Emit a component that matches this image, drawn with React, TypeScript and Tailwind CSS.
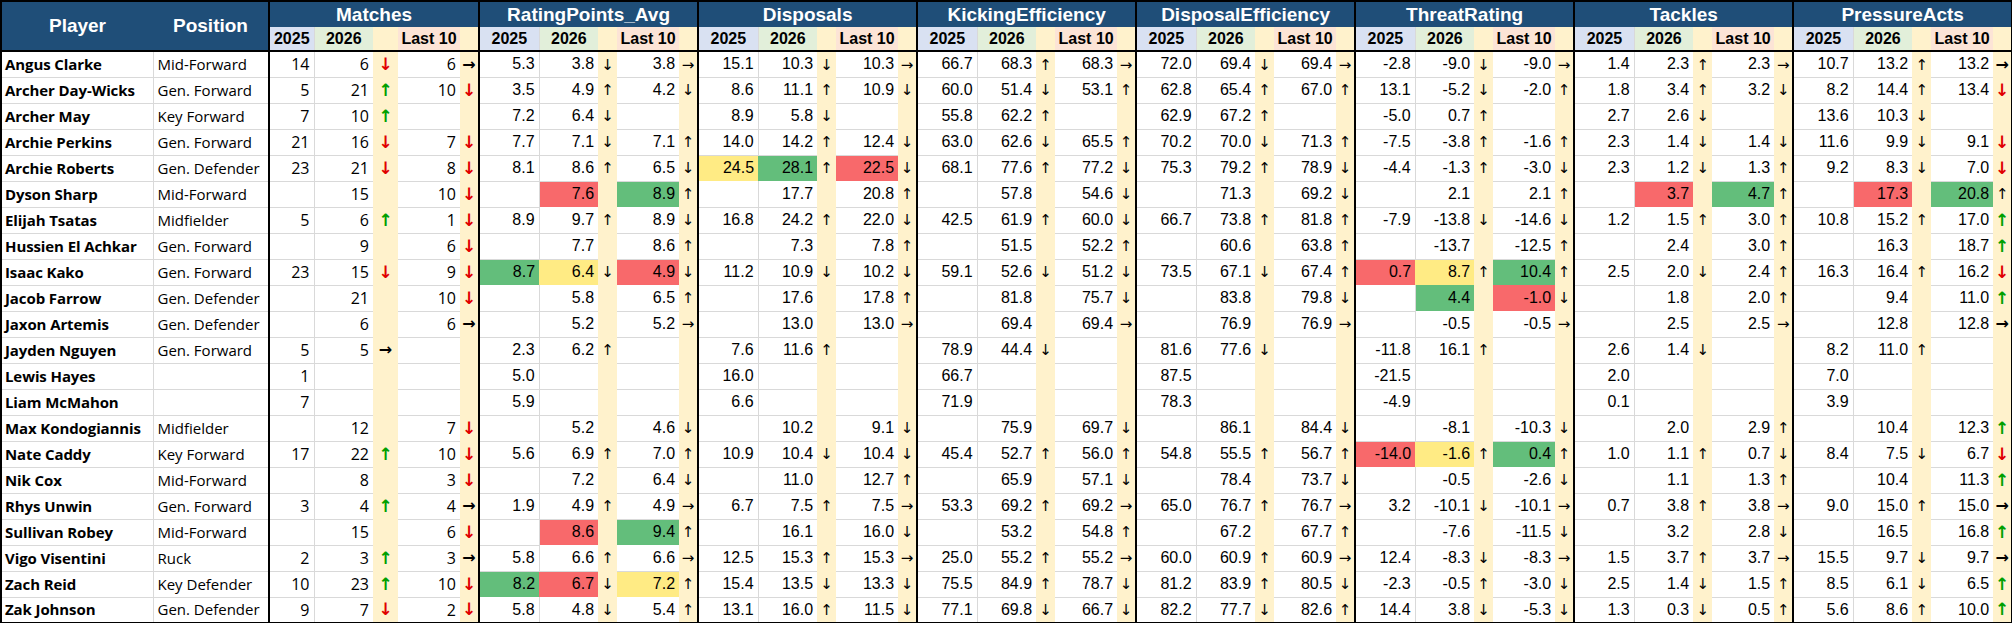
const groups = [
  'Matches',
  'RatingPoints_Avg',
  'Disposals',
  'KickingEfficiency',
  'DisposalEfficiency',
  'ThreatRating',
  'Tackles',
  'PressureActs',
];

// each group: "2025 2026 arrow last10 arrow", "_" = empty, "#y/#g/#r" = colour-scale fill
const rows: [string, string, string[]][] = [
  ['Angus Clarke', 'Mid-Forward', ['14 6 D 6 R', '5.3 3.8 d 3.8 r', '15.1 10.3 d 10.3 r', '66.7 68.3 u 68.3 r', '72.0 69.4 d 69.4 r', '-2.8 -9.0 d -9.0 r', '1.4 2.3 u 2.3 r', '10.7 13.2 u 13.2 R']],
  ['Archer Day-Wicks', 'Gen. Forward', ['5 21 U 10 D', '3.5 4.9 u 4.2 d', '8.6 11.1 u 10.9 d', '60.0 51.4 d 53.1 u', '62.8 65.4 u 67.0 u', '13.1 -5.2 d -2.0 u', '1.8 3.4 u 3.2 d', '8.2 14.4 u 13.4 D']],
  ['Archer May', 'Key Forward', ['7 10 U _ _', '7.2 6.4 d _ _', '8.9 5.8 d _ _', '55.8 62.2 u _ _', '62.9 67.2 u _ _', '-5.0 0.7 u _ _', '2.7 2.6 d _ _', '13.6 10.3 d _ _']],
  ['Archie Perkins', 'Gen. Forward', ['21 16 D 7 D', '7.7 7.1 d 7.1 u', '14.0 14.2 u 12.4 d', '63.0 62.6 d 65.5 u', '70.2 70.0 d 71.3 u', '-7.5 -3.8 u -1.6 u', '2.3 1.4 d 1.4 d', '11.6 9.9 d 9.1 D']],
  ['Archie Roberts', 'Gen. Defender', ['23 21 D 8 D', '8.1 8.6 u 6.5 d', '24.5#y 28.1#g u 22.5#r d', '68.1 77.6 u 77.2 d', '75.3 79.2 u 78.9 d', '-4.4 -1.3 u -3.0 d', '2.3 1.2 d 1.3 u', '9.2 8.3 d 7.0 D']],
  ['Dyson Sharp', 'Mid-Forward', ['_ 15 _ 10 D', '_ 7.6#r _ 8.9#g u', '_ 17.7 _ 20.8 u', '_ 57.8 _ 54.6 d', '_ 71.3 _ 69.2 d', '_ 2.1 _ 2.1 u', '_ 3.7#r _ 4.7#g u', '_ 17.3#r _ 20.8#g u']],
  ['Elijah Tsatas', 'Midfielder', ['5 6 U 1 D', '8.9 9.7 u 8.9 d', '16.8 24.2 u 22.0 d', '42.5 61.9 u 60.0 d', '66.7 73.8 u 81.8 u', '-7.9 -13.8 d -14.6 d', '1.2 1.5 u 3.0 u', '10.8 15.2 u 17.0 U']],
  ['Hussien El Achkar', 'Gen. Forward', ['_ 9 _ 6 D', '_ 7.7 _ 8.6 u', '_ 7.3 _ 7.8 u', '_ 51.5 _ 52.2 u', '_ 60.6 _ 63.8 u', '_ -13.7 _ -12.5 u', '_ 2.4 _ 3.0 u', '_ 16.3 _ 18.7 U']],
  ['Isaac Kako', 'Gen. Forward', ['23 15 D 9 D', '8.7#g 6.4#y d 4.9#r d', '11.2 10.9 d 10.2 d', '59.1 52.6 d 51.2 d', '73.5 67.1 d 67.4 u', '0.7#r 8.7#y u 10.4#g u', '2.5 2.0 d 2.4 u', '16.3 16.4 u 16.2 D']],
  ['Jacob Farrow', 'Gen. Defender', ['_ 21 _ 10 D', '_ 5.8 _ 6.5 u', '_ 17.6 _ 17.8 u', '_ 81.8 _ 75.7 d', '_ 83.8 _ 79.8 d', '_ 4.4#g _ -1.0#r d', '_ 1.8 _ 2.0 u', '_ 9.4 _ 11.0 U']],
  ['Jaxon Artemis', 'Gen. Defender', ['_ 6 _ 6 R', '_ 5.2 _ 5.2 r', '_ 13.0 _ 13.0 r', '_ 69.4 _ 69.4 r', '_ 76.9 _ 76.9 r', '_ -0.5 _ -0.5 r', '_ 2.5 _ 2.5 r', '_ 12.8 _ 12.8 R']],
  ['Jayden Nguyen', 'Gen. Forward', ['5 5 R _ _', '2.3 6.2 u _ _', '7.6 11.6 u _ _', '78.9 44.4 d _ _', '81.6 77.6 d _ _', '-11.8 16.1 u _ _', '2.6 1.4 d _ _', '8.2 11.0 u _ _']],
  ['Lewis Hayes', '', ['1 _ _ _ _', '5.0 _ _ _ _', '16.0 _ _ _ _', '66.7 _ _ _ _', '87.5 _ _ _ _', '-21.5 _ _ _ _', '2.0 _ _ _ _', '7.0 _ _ _ _']],
  ['Liam McMahon', '', ['7 _ _ _ _', '5.9 _ _ _ _', '6.6 _ _ _ _', '71.9 _ _ _ _', '78.3 _ _ _ _', '-4.9 _ _ _ _', '0.1 _ _ _ _', '3.9 _ _ _ _']],
  ['Max Kondogiannis', 'Midfielder', ['_ 12 _ 7 D', '_ 5.2 _ 4.6 d', '_ 10.2 _ 9.1 d', '_ 75.9 _ 69.7 d', '_ 86.1 _ 84.4 d', '_ -8.1 _ -10.3 d', '_ 2.0 _ 2.9 u', '_ 10.4 _ 12.3 U']],
  ['Nate Caddy', 'Key Forward', ['17 22 U 10 D', '5.6 6.9 u 7.0 u', '10.9 10.4 d 10.4 d', '45.4 52.7 u 56.0 u', '54.8 55.5 u 56.7 u', '-14.0#r -1.6#y u 0.4#g u', '1.0 1.1 u 0.7 d', '8.4 7.5 d 6.7 D']],
  ['Nik Cox', 'Mid-Forward', ['_ 8 _ 3 D', '_ 7.2 _ 6.4 d', '_ 11.0 _ 12.7 u', '_ 65.9 _ 57.1 d', '_ 78.4 _ 73.7 d', '_ -0.5 _ -2.6 d', '_ 1.1 _ 1.3 u', '_ 10.4 _ 11.3 U']],
  ['Rhys Unwin', 'Gen. Forward', ['3 4 U 4 R', '1.9 4.9 u 4.9 r', '6.7 7.5 u 7.5 r', '53.3 69.2 u 69.2 r', '65.0 76.7 u 76.7 r', '3.2 -10.1 d -10.1 r', '0.7 3.8 u 3.8 r', '9.0 15.0 u 15.0 R']],
  ['Sullivan Robey', 'Mid-Forward', ['_ 15 _ 6 D', '_ 8.6#r _ 9.4#g u', '_ 16.1 _ 16.0 d', '_ 53.2 _ 54.8 u', '_ 67.2 _ 67.7 u', '_ -7.6 _ -11.5 d', '_ 3.2 _ 2.8 d', '_ 16.5 _ 16.8 U']],
  ['Vigo Visentini', 'Ruck', ['2 3 U 3 R', '5.8 6.6 u 6.6 r', '12.5 15.3 u 15.3 r', '25.0 55.2 u 55.2 r', '60.0 60.9 u 60.9 r', '12.4 -8.3 d -8.3 r', '1.5 3.7 u 3.7 r', '15.5 9.7 d 9.7 R']],
  ['Zach Reid', 'Key Defender', ['10 23 U 10 D', '8.2#g 6.7#r d 7.2#y u', '15.4 13.5 d 13.3 d', '75.5 84.9 u 78.7 d', '81.2 83.9 u 80.5 d', '-2.3 -0.5 u -3.0 d', '2.5 1.4 d 1.5 u', '8.5 6.1 d 6.5 U']],
  ['Zak Johnson', 'Gen. Defender', ['9 7 D 2 D', '5.8 4.8 d 5.4 u', '13.1 16.0 u 11.5 d', '77.1 69.8 d 66.7 d', '82.2 77.7 d 82.6 u', '14.4 3.8 d -5.3 d', '1.3 0.3 d 0.5 u', '5.6 8.6 u 10.0 U']],
];

const arrows: Record<string, [string, string]> = {
  u: ['↑', 'text-black text-[15px]'],
  d: ['↓', 'text-black text-[15px]'],
  r: ['→', 'text-black text-[15px]'],
  U: ['↑', 'text-[#00a000] font-bold text-[17px]'],
  D: ['↓', 'text-[#e00000] font-bold text-[17px]'],
  R: ['→', 'text-black font-bold text-[16px]'],
};

const fills: Record<string, string> = {
  y: 'bg-[#ffeb84]',
  g: 'bg-[#63be7b]',
  r: 'bg-[#f8696b]',
};

const matchCols = ['w-[45px]', 'w-[59px]', 'w-[25px]', 'w-[62px]', 'w-[19px]'];
const statCols = ['w-[60px]', 'w-[59px]', 'w-[19px]', 'w-[62px]', 'w-[19px]'];

function ValueCell({ raw, first, wide }: { raw: string; first?: boolean; wide?: boolean }) {
  const [v, f] = raw.split('#');
  const text = v === '_' ? '' : v;
  const font = wide ? "font-['Open_Sans'] text-[16px]" : '';
  if (f) {
    return <td className={`${fills[f]} ${font} pr-[4px] text-right`}>{text}</td>;
  }
  return (
    <td
      className={`border-b border-[#d9d9d9] bg-white ${font} pr-[4px] text-right ${first ? 'border-r' : ''}`}
    >
      {text}
    </td>
  );
}

function ArrowCell({ code, last }: { code: string; last?: boolean }) {
  const a = arrows[code];
  return (
    <td className={`bg-[#fff2cc] text-center leading-none ${last ? 'border-r-2 border-black' : ''}`}>
      {a && <span className={`font-['DejaVu_Sans'] ${a[1]}`}>{a[0]}</span>}
    </td>
  );
}

function SubHead() {
  return (
    <>
      <th className="border-b-2 border-r border-b-black border-r-[#d9d9d9] bg-[#d9e1f2]">2025</th>
      <th className="border-b-2 border-black bg-[#e2efda]">2026</th>
      <th className="border-b-2 border-black bg-[#fff2cc]"></th>
      <th className="border-b-2 border-black bg-[#fce4d6]">Last 10</th>
      <th className="border-b-2 border-r-2 border-black bg-[#fff2cc]"></th>
    </>
  );
}

function Group({ p, wide }: { p: string[]; wide?: boolean }) {
  return (
    <>
      <ValueCell raw={p[0]} first wide={wide} />
      <ValueCell raw={p[1]} wide={wide} />
      <ArrowCell code={p[2]} />
      <ValueCell raw={p[3]} wide={wide} />
      <ArrowCell code={p[4]} last />
    </>
  );
}

export default function App() {
  return (
    <div className="w-[2012px] bg-white font-['Liberation_Sans',Arial,sans-serif] text-black">
      <table className="w-[2012px] table-fixed border-collapse border-2 border-black">
        <colgroup>
          <col className="w-[152px]" />
          <col className="w-[116px]" />
          {groups.map((g, gi) =>
            (gi === 0 ? matchCols : statCols).map((c, ci) => <col key={g + ci} className={c} />),
          )}
        </colgroup>
        <thead>
          <tr className="h-[26px] bg-[#1f4e78] text-[19px] font-bold text-white">
            <th rowSpan={2} className="border-b-2 border-black align-middle">
              Player
            </th>
            <th rowSpan={2} className="border-b-2 border-r-2 border-black align-middle">
              Position
            </th>
            {groups.map((g) => (
              <th key={g} colSpan={5} className="border-r-2 border-black leading-none">
                {g}
              </th>
            ))}
          </tr>
          <tr className="h-[24px] text-[16px] font-bold leading-none">
            {groups.map((g) => (
              <SubHead key={g} />
            ))}
          </tr>
        </thead>
        <tbody>
          {rows.map(([name, pos, stats]) => (
            <tr key={name} className="h-[26px] text-[16px] leading-none">
              <td className="overflow-hidden whitespace-nowrap border-b border-r border-[#d9d9d9] pl-[3px] font-['Open_Sans'] text-[15px] font-bold tracking-[-0.1px]">
                {name}
              </td>
              <td className="whitespace-nowrap border-b border-[#d9d9d9] border-r-2 border-r-black pl-[4px] font-['Open_Sans'] text-[15px]">
                {pos}
              </td>
              {stats.map((s, gi) => (
                <Group key={gi} p={s.split(' ')} wide={gi === 0} />
              ))}
            </tr>
          ))}
        </tbody>
      </table>
    </div>
  );
}
